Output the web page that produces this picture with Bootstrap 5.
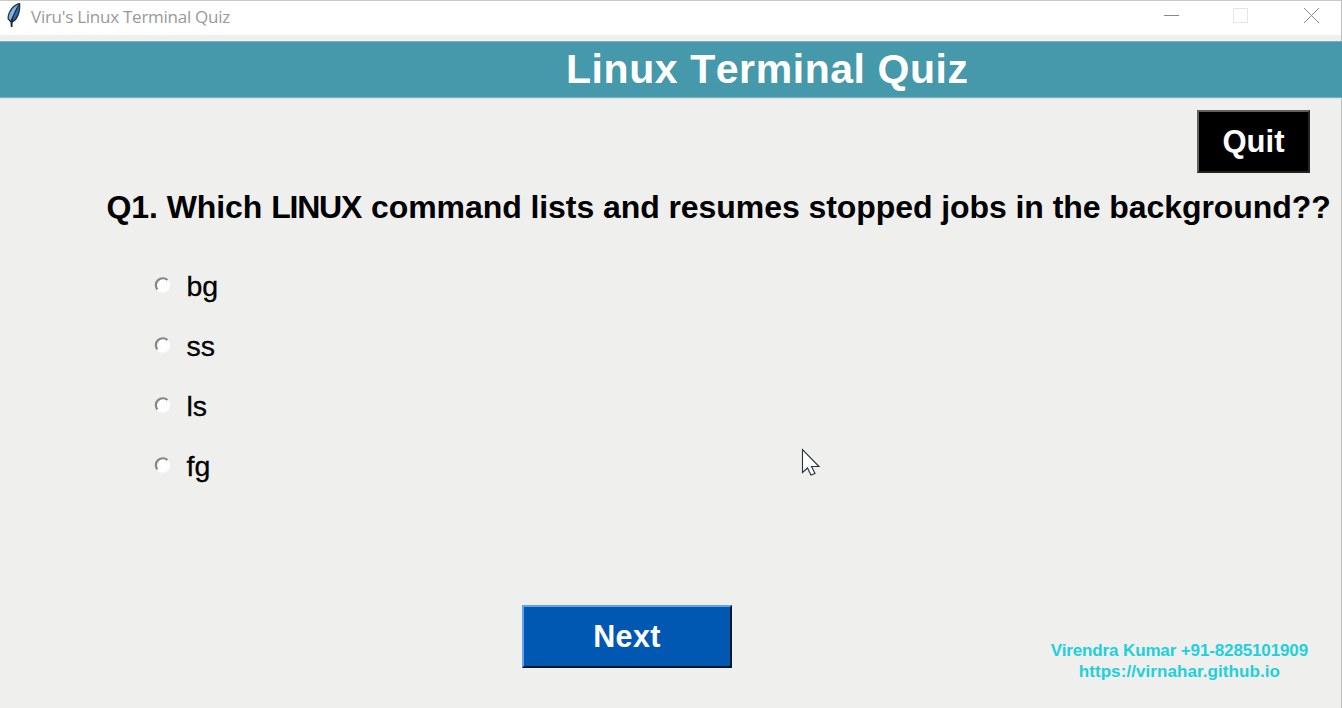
<!DOCTYPE html>
<html lang="en">
<head>
<meta charset="utf-8">
<meta name="viewport" content="width=device-width, initial-scale=1">
<title>Viru's Linux Terminal Quiz</title>
<link href="https://cdn.jsdelivr.net/npm/bootstrap@5.3.0/dist/css/bootstrap.min.css" rel="stylesheet">
<style>
body{background:#efefed;font-family:"Liberation Sans",Arial,sans-serif;color:#000;overflow:hidden}
.app-window{height:708px;border-top:1px solid #c9c9c9;border-right:1px solid #bcbcbc}
.title-bar{height:34px;background:#fff;padding-left:6px;padding-right:21px}
.title-text{font:17px/32px "Open Sans","Noto Sans",sans-serif;color:#999;margin:-3px 0 0 10px;letter-spacing:-.26px;white-space:nowrap}
.feather{margin-top:-6px}
.window-controls{margin-top:-5px}
.banner{height:57px;margin-top:6px;margin-right:-1px;padding-left:566px;background:#4599ab;border-top:1px solid #75b2c0;border-bottom:1px solid #75b2c0;box-shadow:0 1px #d5e4e6;color:#fff;font-size:41px;line-height:55px;font-weight:700;letter-spacing:.57px;font-kerning:none;white-space:nowrap}
.tk-btn{border-radius:0;border-style:solid;border-width:2px;font-weight:700;font-size:32px;line-height:1;color:#fff;padding:0}
.btn-quit{width:113px;height:63px;margin:12px 31px 0 0;background:#000;border-color:#606060 #252525 #222 #606060;font-size:31px}
.btn-next{width:210px;height:63px;background:#0058b3;border-color:#63a1f3 #081526 #081526 #63a1f3;font-size:30.5px;letter-spacing:.4px}
.question{margin:15px 0 0 106.500px;font-size:32px;line-height:38px;font-weight:700;letter-spacing:-.07px;white-space:nowrap}
.question .term{letter-spacing:-1.2px;margin-right:1px}
.choices{margin:31px 0 0 154px}
.choice{height:60px;font-size:28.5px;line-height:58px;gap:15.5px;cursor:pointer;-webkit-text-stroke:.3px #000}
.choice span{margin-top:-2px}
.choice svg{margin-top:-4px}
.bottom-row{margin-top:108px;padding-left:522px;padding-right:33px}
.credit{margin-top:35px;font-size:17px;line-height:21px;font-weight:700;color:#20d0dc;letter-spacing:-.13px;white-space:nowrap}
.credit .site{letter-spacing:.08px}
.pointer{position:absolute;left:801px;top:447px}
</style>
</head>
<body>
<div class="app-window position-relative">
  <header class="title-bar d-flex align-items-center">
    <svg class="feather" width="15" height="26" viewBox="0 0 15 26"><path d="M14.200 1C8 1 1.200 9 1.500 17l3 3.500.3 4.500 1.700 0 .1-4.500C12.500 18 15 9 14.200 1Z" fill="#26323e"/><path d="M12.500 2.500C7 4.500 2.600 11 2.800 16.500l2 2L9 9Z" fill="#7fb2dd"/><path d="M13 3.500C13 10 10.800 16 6.500 18.500L9 10Z" fill="#2b6cb0"/><path d="M12 4 6 17 5.600 24" fill="none" stroke="#10161c" stroke-width=".7"/></svg>
    <span class="title-text">Viru's Linux Terminal Quiz</span>
    <svg class="window-controls ms-auto" width="158" height="17" viewBox="0 0 158 17" fill="none" stroke-width="1"><path d="M2 8.500h15" stroke="#888"/><path d="M71.500 1.500h14v14h-14z" stroke="#e5e5e5"/><path d="m142 1 15 15M157 1l-15 15" stroke="#888"/></svg>
  </header>
  <div class="banner">Linux Terminal Quiz</div>
  <main>
    <div class="d-flex justify-content-end"><button type="button" class="btn tk-btn btn-quit">Quit</button></div>
    <div class="question">Q1. Which <span class="term">LINUX</span> command lists and resumes stopped jobs in the background??</div>
    <div class="choices d-flex flex-column">
      <label class="choice d-flex align-items-center"><svg width="17" height="18" viewBox="0 0 17 18"><circle cx="8.700" cy="9.300" r="7.500" fill="#fff"/><path d="M3.300 13.500A7 7 0 0 1 13.500 4" fill="none" stroke="#858585" stroke-width="2.200"/></svg><span>bg</span></label>
      <label class="choice d-flex align-items-center"><svg width="17" height="18" viewBox="0 0 17 18"><circle cx="8.700" cy="9.300" r="7.500" fill="#fff"/><path d="M3.300 13.500A7 7 0 0 1 13.500 4" fill="none" stroke="#858585" stroke-width="2.200"/></svg><span>ss</span></label>
      <label class="choice d-flex align-items-center"><svg width="17" height="18" viewBox="0 0 17 18"><circle cx="8.700" cy="9.300" r="7.500" fill="#fff"/><path d="M3.300 13.500A7 7 0 0 1 13.500 4" fill="none" stroke="#858585" stroke-width="2.200"/></svg><span>ls</span></label>
      <label class="choice d-flex align-items-center"><svg width="17" height="18" viewBox="0 0 17 18"><circle cx="8.700" cy="9.300" r="7.500" fill="#fff"/><path d="M3.300 13.500A7 7 0 0 1 13.500 4" fill="none" stroke="#858585" stroke-width="2.200"/></svg><span>fg</span></label>
    </div>
    <div class="bottom-row d-flex justify-content-between align-items-start">
      <button type="button" class="btn tk-btn btn-next">Next</button>
      <div class="credit text-center">Virendra Kumar +91-8285101909<br><span class="site">https://virnahar.github.io</span></div>
    </div>
  </main>
  <svg class="pointer" width="20" height="29" viewBox="0 0 20 29"><path d="M1.500 1.500v23l5-4.500 3.500 7 4-1.500-3.500-7h7.500Z" fill="#fff" stroke="#26313c" stroke-width="1.100"/></svg>
</div>
<script src="https://cdn.jsdelivr.net/npm/bootstrap@5.3.0/dist/js/bootstrap.bundle.min.js"></script>
</body>
</html>
